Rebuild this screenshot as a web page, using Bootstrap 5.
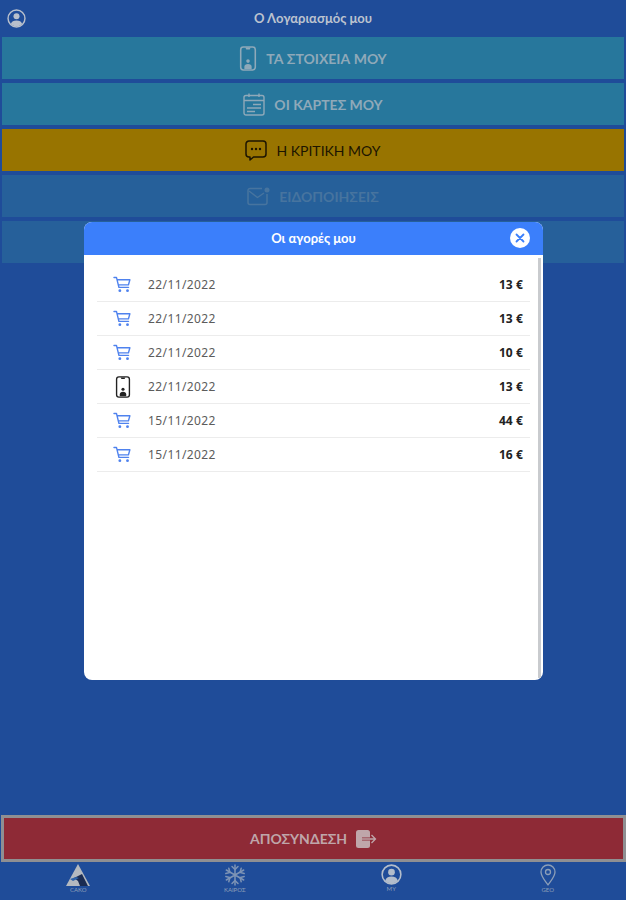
<!DOCTYPE html>
<html lang="en">
<head>
    <meta charset="UTF-8">
    <meta name="viewport" content="width=device-width, initial-scale=1.0">
    <title>Ο Λογαριασμός μου</title>
    <link rel="stylesheet" href="https://cdn.jsdelivr.net/npm/bootstrap@5.3.0/dist/css/bootstrap.min.css">
    <style>
        body {
            background-color: #1f4c99;
            font-family: "Lato", "Open Sans", sans-serif;
            height: 900px;
            overflow: hidden;
        }
        .page-wrap { height: 900px; }

        /* top bar */
        .top-bar { height: 37px; padding: 0 7px 1px; color: #b9c0cc; }
        .top-title { font-size: 13px; font-weight: 700; color: #bcc3cf; left: 0; right: 0; top: 9px; }

        /* menu buttons */
        .menu-stack { gap: 4px; padding: 0 2px; }
        .menu-btn {
            height: 42px;
            gap: 9px;
            font-size: 14px;
            font-weight: 700;
            background: #27779c;
            color: #8fa9b9;
        }
        .menu-btn.is-yellow { background: #987400; color: #1c1500; font-weight: 400; }
        .menu-btn.is-blue { background: #26609a; color: #47749f; }
        .menu-btn.is-last { background: #26609a; }

        /* logout */
        .logout-btn {
            height: 47px;
            margin: 0 0 0 1px;
            gap: 9px;
            background: #8e2a36;
            border: 3px solid #8f8f92;
            color: #bfa6aa;
            font-size: 14px;
            font-weight: 700;
        }

        /* bottom tabs */
        .tab-bar { height: 38px; }
        .tab-item { color: #8d9fb8; font-size: 6px; line-height: 7px; padding-top: 2px; width: 25%; }
        .tab-item svg { display: block; }
        .tab-user { color: #b3bdcb; }

        /* purchases dialog */
        .buy-dialog {
            position: absolute;
            left: 84px;
            top: 222px;
            width: 459px;
            height: 458px;
            border: 0;
            border-radius: 8px;
            overflow: hidden;
            background: #fff;
        }
        .buy-head {
            height: 33px;
            background: #3b7ffb;
            color: #fff;
            font-size: 13px;
            font-weight: 700;
        }
        .buy-close {
            position: absolute;
            right: 13px;
            top: 6px;
            width: 20px;
            height: 20px;
            border-radius: 50%;
            background: #fff;
        }
        .buy-body { padding: 13px 13px 0; }
        .buy-scroll {
            position: absolute;
            right: 2px;
            top: 36px;
            bottom: 2px;
            width: 3px;
            background: #c9cbce;
        }
        .buy-row {
            height: 34px;
            padding: 0 7px 0 16px;
            border-bottom: 1px solid #ececec;
            background: transparent;
        }
        .buy-icon { width: 19px; }
        .buy-cart { color: #4f82ee; }
        .buy-phone { color: #222; }
        .buy-date {
            margin-left: 16px;
            font-family: "Noto Sans", sans-serif;
            font-size: 12px;
            letter-spacing: .4px;
            color: #5c5c5c;
        }
        .buy-price {
            font-family: "Open Sans", sans-serif;
            font-size: 12px;
            font-weight: 700;
            letter-spacing: .1px;
            color: #222;
        }
    </style>
</head>
<body>

    <svg width="0" height="0" class="position-absolute">
        <symbol id="ic-cart" viewBox="0 0 20 18">
            <path d="M1 1.500h2.600l2.600 10.500h10.200M4.600 4h13.200l-1.500 5.400H5.900" fill="none" stroke="currentColor" stroke-width="1.500" stroke-linejoin="round" stroke-linecap="round"/>
            <circle cx="7.200" cy="15.500" r="1.500" fill="currentColor"/>
            <circle cx="15.300" cy="15.500" r="1.500" fill="currentColor"/>
        </symbol>
        <symbol id="ic-phone" viewBox="0 0 16 24">
            <rect x="1" y="1" width="14" height="22" rx="2.500" fill="none" stroke="currentColor" stroke-width="1.500"/>
            <path d="M5.500 1.500h5l-.8 1.800H6.300z" fill="currentColor"/>
            <circle cx="8" cy="14.500" r="1.700" fill="currentColor"/>
            <path d="M4.500 22v-2.200c0-1.600 1.400-2.600 3.500-2.600s3.500 1 3.500 2.600V22z" fill="currentColor"/>
        </symbol>
        <symbol id="ic-user" viewBox="0 0 24 24">
            <circle cx="12" cy="12" r="10.700" fill="none" stroke="currentColor" stroke-width="1.800"/>
            <circle cx="12" cy="9.300" r="3.800" fill="currentColor"/>
            <path d="M4.800 19c.8-3.200 3.500-4.600 7.200-4.600s6.400 1.400 7.200 4.600c-1.800 2-4.300 3.200-7.200 3.200S6.600 21 4.800 19z" fill="currentColor"/>
        </symbol>
    </svg>

    <div class="page-wrap d-flex flex-column position-relative">

        <div class="top-bar d-flex align-items-center position-relative">
            <svg width="19" height="19"><use href="#ic-user"/></svg>
            <div class="top-title position-absolute text-center">Ο Λογαριασμός μου</div>
        </div>

        <div class="menu-stack d-flex flex-column">
            <div class="menu-btn d-flex align-items-center justify-content-center">
                <svg width="18" height="25"><use href="#ic-phone"/></svg>
                <span>ΤΑ ΣΤΟΙΧΕΙΑ ΜΟΥ</span>
            </div>
            <div class="menu-btn d-flex align-items-center justify-content-center">
                <svg width="22" height="23" viewBox="0 0 22 23" fill="none" stroke="currentColor" stroke-width="1.400">
                    <rect x="1" y="2.500" width="20" height="19.500" rx="2"/>
                    <path d="M1 7.500h20M6 .5v3.500M16 .5v3.500M10 11.500h8M4 15h14M4 18.500h8" />
                </svg>
                <span>ΟΙ ΚΑΡΤΕΣ ΜΟΥ</span>
            </div>
            <div class="menu-btn is-yellow d-flex align-items-center justify-content-center">
                <svg width="22" height="21" viewBox="0 0 22 21">
                    <path d="M4 1h14a3 3 0 0 1 3 3v10a3 3 0 0 1-3 3H8.500L5 20v-3H4a3 3 0 0 1-3-3V4a3 3 0 0 1 3-3z" fill="none" stroke="currentColor" stroke-width="1.500" stroke-linejoin="round"/>
                    <circle cx="7" cy="9" r="1.200" fill="currentColor"/>
                    <circle cx="11" cy="9" r="1.200" fill="currentColor"/>
                    <circle cx="15" cy="9" r="1.200" fill="currentColor"/>
                </svg>
                <span>Η ΚΡΙΤΙΚΗ ΜΟΥ</span>
            </div>
            <div class="menu-btn is-blue d-flex align-items-center justify-content-center">
                <svg width="23" height="19" viewBox="0 0 23 19" fill="none" stroke="currentColor" stroke-width="1.500">
                    <path d="M15 1.500H3a2 2 0 0 0-2 2v12a2 2 0 0 0 2 2h15a2 2 0 0 0 2-2V7"/>
                    <path d="M2 4l8.500 6.500L17 6" stroke-linejoin="round"/>
                    <circle cx="20" cy="3" r="2.500" fill="currentColor" stroke="none"/>
                </svg>
                <span>ΕΙΔΟΠΟΙΗΣΕΙΣ</span>
            </div>
            <div class="menu-btn is-last"></div>
        </div>

        <div class="flex-grow-1"></div>

        <div class="logout-btn d-flex align-items-center justify-content-center">
            <span>ΑΠΟΣΥΝΔΕΣΗ</span>
            <svg width="21" height="18" viewBox="0 0 21 18">
                <rect x="0" y="0" width="14" height="18" rx="2.500" fill="currentColor"/>
                <path d="M6 9h13M15.500 5l4 4-4 4" fill="none" stroke="#8e2a36" stroke-width="3.200"/>
                <path d="M6 9h13M15.500 5l4 4-4 4" fill="none" stroke="currentColor" stroke-width="1.300"/>
            </svg>
        </div>

        <div class="tab-bar d-flex">
            <div class="tab-item d-flex flex-column align-items-center">
                <svg width="24" height="22" viewBox="0 0 24 22">
                    <path d="M12 0l12 22H0z" fill="#b4b9bf"/>
                    <path d="M8 14l8-4 6 12H14l-2-5z" fill="#1b2c52"/>
                    <path d="M4 15l6-2 3 1-6 3z" fill="#2e62a8"/>
                </svg>
                <span>CAKO</span>
            </div>
            <div class="tab-item d-flex flex-column align-items-center">
                <svg width="22" height="22" viewBox="0 0 22 22" fill="none" stroke="#7d93b5" stroke-width="1.500" stroke-linecap="round">
                    <path d="M11 1v20M2.300 6l17.400 10M2.300 16L19.700 6"/>
                    <path d="M8 2.500l3 3 3-3M8 19.500l3-3 3 3M1.800 9.500l4.100-1.100-1.100-4.100M20.200 12.500l-4.100 1.100 1.100 4.100M1.800 12.500l4.100 1.100-1.100 4.100M20.200 9.500l-4.100-1.100 1.100-4.100"/>
                </svg>
                <span>ΚΑΙΡΟΣ</span>
            </div>
            <div class="tab-item d-flex flex-column align-items-center">
                <svg width="21" height="21" class="tab-user"><use href="#ic-user"/></svg>
                <span>MY</span>
            </div>
            <div class="tab-item d-flex flex-column align-items-center">
                <svg width="16" height="22" viewBox="0 0 16 22" fill="none" stroke="#8d9fb8" stroke-width="1.300">
                    <path d="M8 21C5 16.500 1 12.500 1 8a7 7 0 0 1 14 0c0 4.500-4 8.500-7 13z" stroke-linejoin="round"/>
                    <circle cx="8" cy="8" r="2.500"/>
                </svg>
                <span>GEO</span>
            </div>
        </div>

        <div class="buy-dialog card">
            <div class="buy-head d-flex align-items-center justify-content-center position-relative">
                Οι αγορές μου
                <div class="buy-close d-flex align-items-center justify-content-center">
                    <svg width="10" height="10" viewBox="0 0 10 10"><path d="M1.500 1.500l7 7M8.500 1.500l-7 7" stroke="#3b7ffb" stroke-width="1.800" stroke-linecap="round"/></svg>
                </div>
            </div>
            <div class="buy-scroll"></div>
            <div class="buy-body">
                <div class="list-group list-group-flush" id="buyList"></div>
            </div>
        </div>

    </div>

    <script src="https://cdn.jsdelivr.net/npm/bootstrap@5.3.0/dist/js/bootstrap.bundle.min.js"></script>
    <script>
        const purchases = [
            { icon: "cart", date: "22/11/2022", price: "13 €" },
            { icon: "cart", date: "22/11/2022", price: "13 €" },
            { icon: "cart", date: "22/11/2022", price: "10 €" },
            { icon: "phone", date: "22/11/2022", price: "13 €" },
            { icon: "cart", date: "15/11/2022", price: "44 €" },
            { icon: "cart", date: "15/11/2022", price: "16 €" }
        ];

        const rows = purchases.map(function (p) {
            const icon = p.icon === "cart"
                ? '<svg width="19" height="17" class="buy-cart"><use href="#ic-cart"/></svg>'
                : '<svg width="16" height="22" class="buy-phone"><use href="#ic-phone"/></svg>';
            return '<div class="buy-row d-flex align-items-center">'
                + '<div class="buy-icon d-flex justify-content-center">' + icon + '</div>'
                + '<div class="buy-date">' + p.date + '</div>'
                + '<div class="buy-price ms-auto">' + p.price + '</div>'
                + '</div>';
        });
        document.getElementById("buyList").innerHTML = rows.join("");
    </script>
</body>
</html>
